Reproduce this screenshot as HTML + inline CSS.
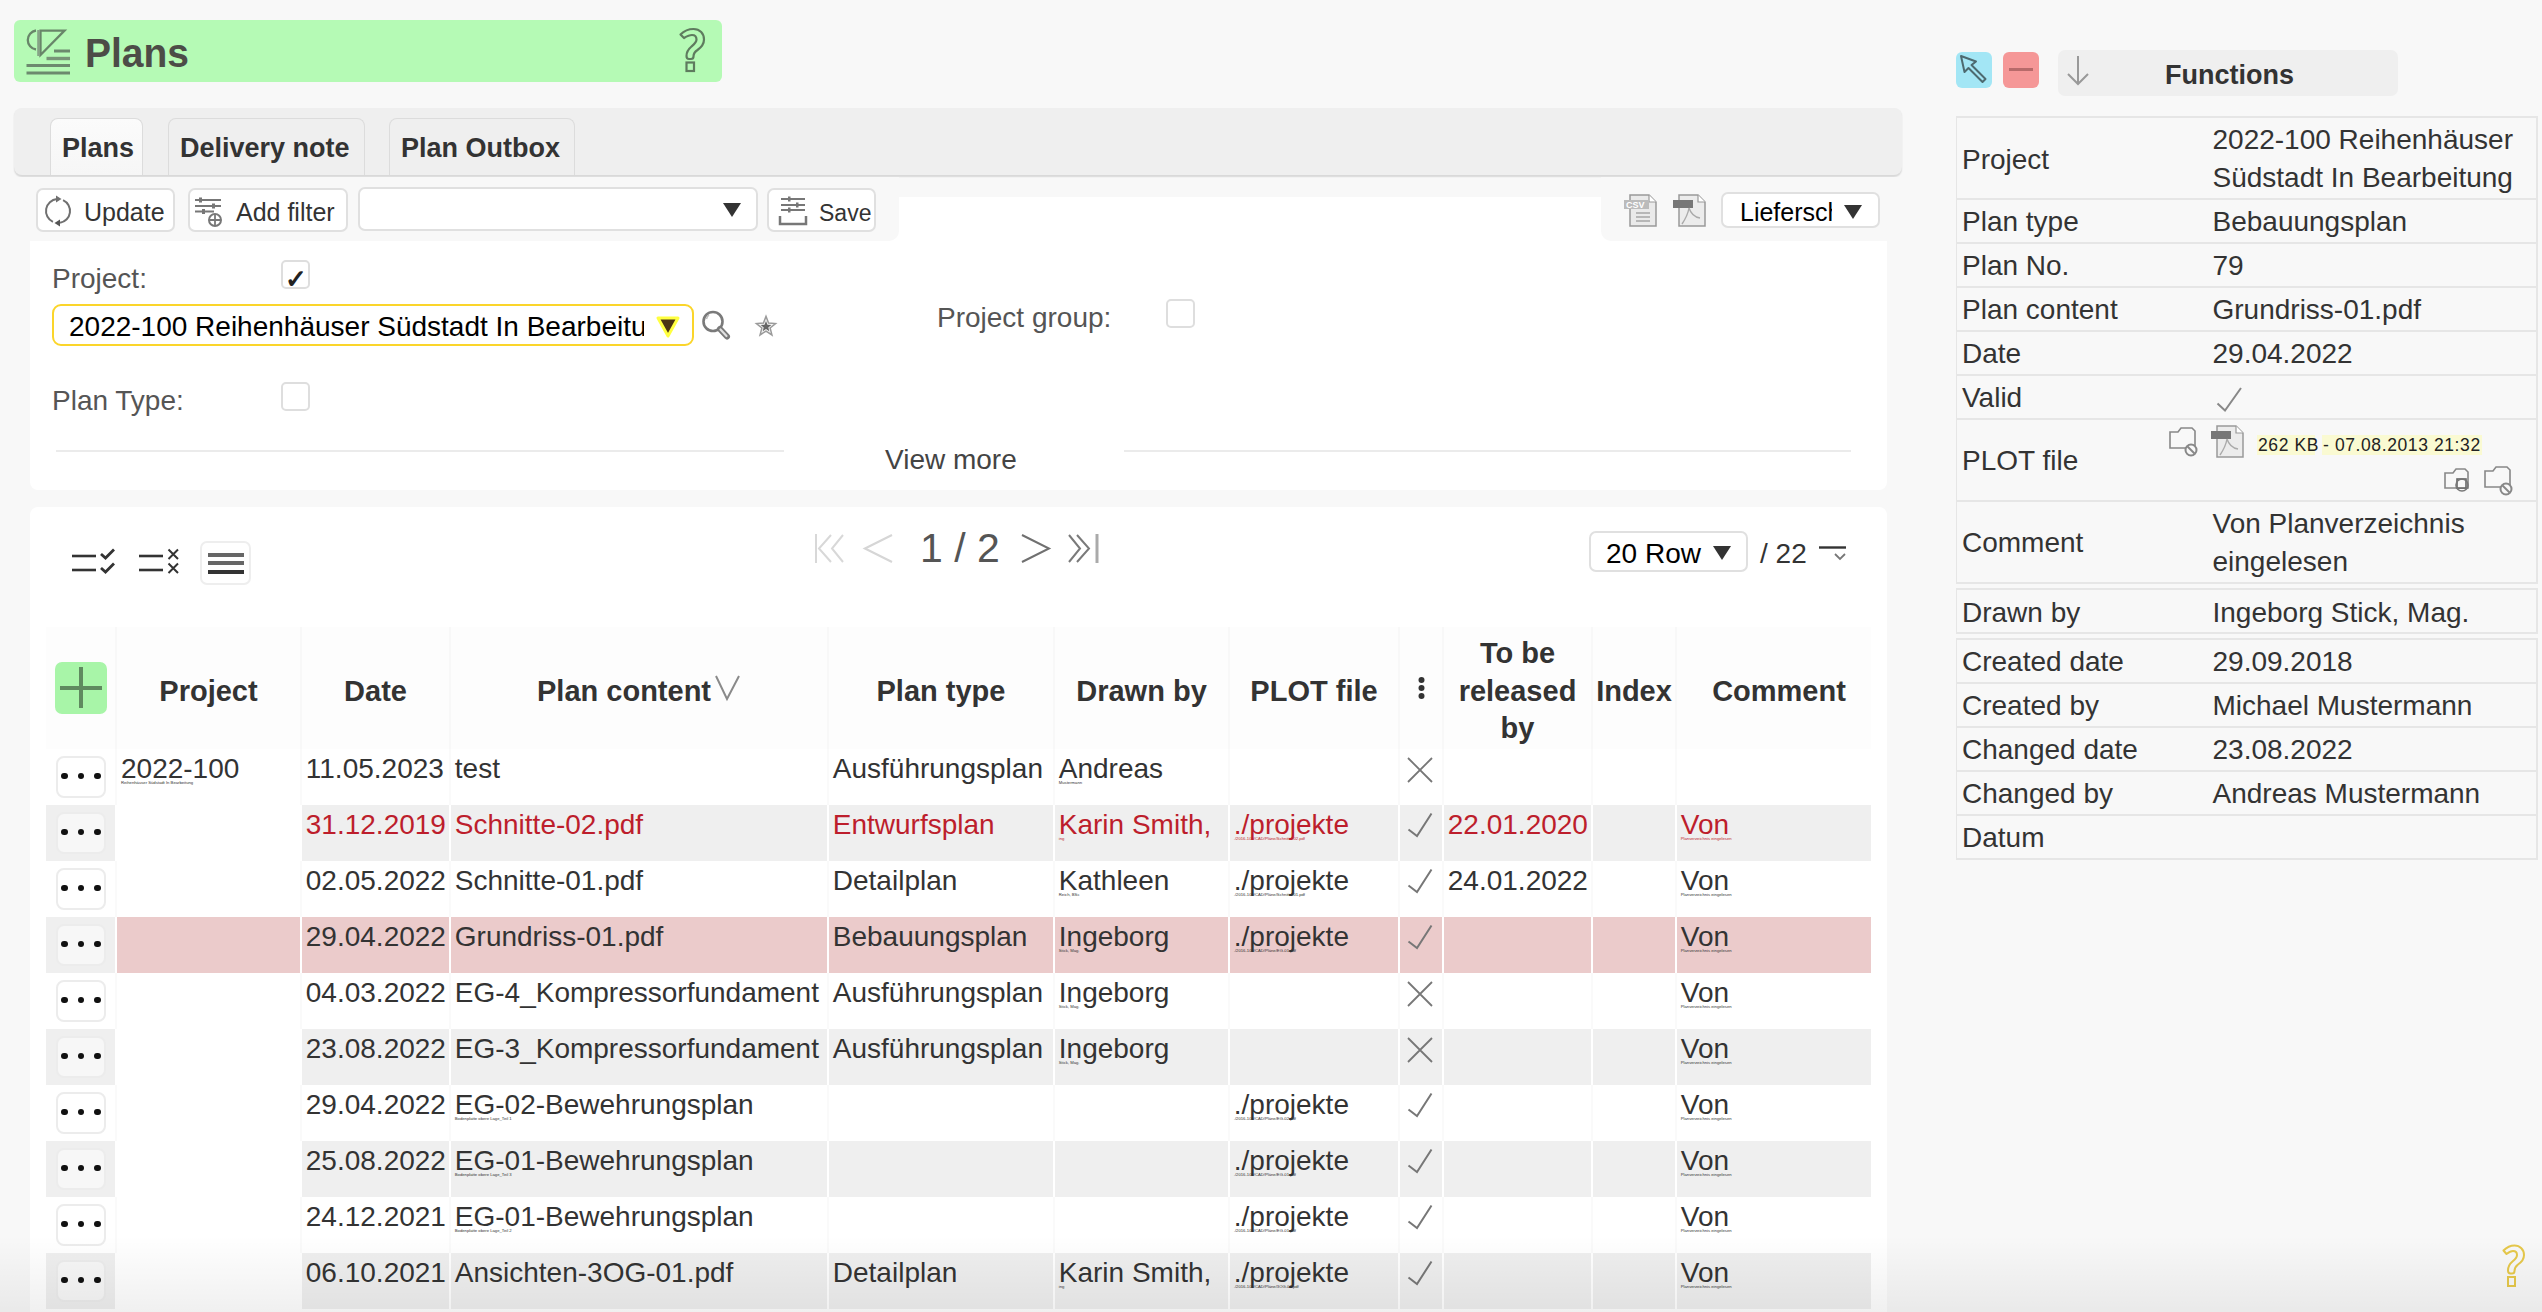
<!DOCTYPE html>
<html><head><meta charset="utf-8"><title>Plans</title>
<style>
html,body{margin:0;padding:0;}
body{width:2542px;height:1312px;overflow:hidden;background:#f8f8f8;position:relative;font-family:"Liberation Sans",sans-serif;}
.t,.b,.s{position:absolute;}
.t{margin:0;padding:0;}
.s{overflow:visible;}
</style></head><body>

<div class="b" style="left:14px;top:20px;width:708px;height:62px;background:#b5fab5;border-radius:6px;"></div>
<svg class="s" style="left:24px;top:28px;" width="50" height="50" viewBox="0 0 50 50">
<g fill="none" stroke="#688669" stroke-width="2.3">
<path d="M12 2.5 A9.6 9.6 0 0 0 12 21.5"/>
<path d="M16.5 2.6 L40.5 2.6 L16.5 27 Z"/>
</g>
<g stroke="#6c8a6e" stroke-width="3">
<path d="M30 23 L46 23"/>
<path d="M22.5 30.5 L46 30.5" stroke="#789578" stroke-width="3.4"/>
<path d="M2.5 37.5 L46 37.5"/>
<path d="M2.5 45 L46 45"/>
</g>
<path d="M14.5 2 L14.5 28" stroke="#86a386" stroke-width="2.6"/>
</svg>
<div class="t" style="left:85px;top:27.8px;font-size:39px;line-height:51px;color:#4c4c47;font-weight:700;white-space:nowrap;text-align:left;transform:scaleY(1.05);transform-origin:0 70%;">Plans</div>
<svg class="s" style="left:676px;top:26px;" width="32" height="48" viewBox="0 0 32 48">
<path d="M4.5 8.5 C9 4 14 3 17.5 3 C24 3 28 7.5 28 13.5 C28 19 25 21.5 21.5 24 C18.5 26 17.5 27.5 17.5 30.5 C17.5 32 16.5 33 15 33 L13 33 C11.5 33 10.5 32 10.5 30 C10.5 25.5 12.5 23 15.5 20.5 C18.5 18 20.5 16.5 20.5 13.5 C20.5 10.5 18.5 9 16 9 C13 9 10.5 10.5 8 12 Z" fill="none" stroke="#5e7b5e" stroke-width="2.2" stroke-linejoin="round"/>
<rect x="10.5" y="36.5" width="7.5" height="8.5" fill="none" stroke="#5e7b5e" stroke-width="2.2"/>
</svg>
<div class="b" style="left:14px;top:108px;width:1888px;height:67px;background:#efefef;border-radius:8px;box-shadow:0 1.5px 1.5px rgba(0,0,0,0.13);"></div>
<div class="b" style="left:50px;top:118px;width:93px;height:57px;background:linear-gradient(#fbfbfb,#f6f6f6);border:1px solid #dcdcdc;border-bottom:none;border-radius:8px 8px 0 0;box-sizing:border-box;"></div>
<div class="b" style="left:168px;top:118px;width:197px;height:57px;background:#efefef;border:1px solid #dcdcdc;border-bottom:none;border-radius:8px 8px 0 0;box-sizing:border-box;"></div>
<div class="b" style="left:389px;top:118px;width:186px;height:57px;background:#efefef;border:1px solid #dcdcdc;border-bottom:none;border-radius:8px 8px 0 0;box-sizing:border-box;"></div>
<div class="t" style="left:62px;top:130.7px;font-size:27px;line-height:35px;color:#333;font-weight:700;white-space:nowrap;text-align:left;">Plans</div>
<div class="t" style="left:180px;top:130.7px;font-size:27px;line-height:35px;color:#333;font-weight:700;white-space:nowrap;text-align:left;">Delivery note</div>
<div class="t" style="left:401px;top:130.7px;font-size:27px;line-height:35px;color:#333;font-weight:700;white-space:nowrap;text-align:left;">Plan Outbox</div>
<div class="b" style="left:30px;top:197px;width:1857px;height:293px;background:#fff;border-radius:8px;"></div>
<div class="b" style="left:14px;top:177px;width:885px;height:64px;background:#f8f8f8;border-radius:0 0 10px 0;"></div>
<div class="b" style="left:1601px;top:177px;width:301px;height:64px;background:#f8f8f8;border-radius:0 0 0 10px;"></div>
<div class="b" style="left:36px;top:188px;width:139px;height:44px;background:#fff;border:2px solid #e0e0e0;border-radius:7px;box-sizing:border-box;"></div>
<div class="b" style="left:188px;top:188px;width:160px;height:44px;background:#fff;border:2px solid #e0e0e0;border-radius:7px;box-sizing:border-box;"></div>
<div class="b" style="left:358px;top:187px;width:400px;height:44px;background:#fff;border:2px solid #e0e0e0;border-radius:7px;box-sizing:border-box;"></div>
<div class="b" style="left:767px;top:188px;width:109px;height:44px;background:#fff;border:2px solid #e0e0e0;border-radius:7px;box-sizing:border-box;"></div>
<div class="t" style="left:84px;top:195.9px;font-size:25px;line-height:32px;color:#333;font-weight:400;white-space:nowrap;text-align:left;">Update</div>
<div class="t" style="left:236px;top:195.9px;font-size:25px;line-height:32px;color:#333;font-weight:400;white-space:nowrap;text-align:left;">Add filter</div>
<div class="t" style="left:819px;top:197.5px;font-size:23px;line-height:30px;color:#333;font-weight:400;white-space:nowrap;text-align:left;">Save</div>
<svg class="s" style="left:44px;top:196px;" width="30" height="32" viewBox="0 0 30 32">
<g fill="none" stroke="#707070" stroke-width="2">
<path d="M19.07 4.12 A12 12 0 0 1 16.08 26.82"/>
<path d="M8.93 25.88 A12 12 0 0 1 12.95 3.05"/>
</g>
<path d="M12 -0.5 L12 6.5 L17.5 3 Z" fill="#707070"/>
<path d="M16 23.5 L16 30.5 L10.5 27 Z" fill="#555"/>
</svg>
<svg class="s" style="left:194px;top:196px;" width="32" height="32" viewBox="0 0 32 32">
<g stroke="#777" stroke-width="2">
<path d="M1 4 H27"/><path d="M1 10 H27"/><path d="M1 15.5 H20"/>
</g>
<g fill="#777"><rect x="5" y="1.5" width="3" height="5"/><rect x="18" y="7.5" width="3" height="5"/><rect x="8" y="13" width="3" height="5"/></g>
<circle cx="21" cy="24" r="6" fill="none" stroke="#777" stroke-width="2"/>
<path d="M21 18 V30 M15 24 H27" stroke="#777" stroke-width="1.8"/>
</svg>
<svg class="s" style="left:722px;top:202px;" width="20" height="16" viewBox="0 0 20 16"><path d="M1 1 H19 L10 15 Z" fill="#333"/></svg>
<svg class="s" style="left:778px;top:196px;" width="30" height="30" viewBox="0 0 30 30">
<g stroke="#777" stroke-width="2">
<path d="M3 3 H27"/><path d="M3 9 H27"/><path d="M3 14 H27"/>
</g>
<g fill="#777"><rect x="10" y="0.5" width="2.5" height="5"/><rect x="18" y="6.5" width="2.5" height="5"/><rect x="10" y="11.5" width="2.5" height="5"/></g>
<path d="M2 20 V28 H28 V20" fill="none" stroke="#777" stroke-width="2.5"/>
</svg>
<svg class="s" style="left:1624px;top:194px;" width="34" height="34" viewBox="0 0 34 34">
<path d="M6 1 H25 L32 8 V32 H6 Z" fill="#eaeaea" stroke="#999" stroke-width="1.5"/>
<path d="M25 1 V8 H32" fill="#fff" stroke="#999" stroke-width="1.2"/>
<rect x="0" y="6" width="25" height="9" fill="#bbb"/>
<text x="2" y="14" font-size="9" font-family="Liberation Sans" font-weight="700" fill="#fff">CSV</text>
<g stroke="#aaa" stroke-width="1.6"><path d="M12 19 H26"/><path d="M12 23 H26"/><path d="M12 27 H26"/></g>
</svg>
<svg class="s" style="left:1673px;top:194px;" width="34" height="34" viewBox="0 0 34 34">
<path d="M6 1 H25 L32 8 V32 H6 Z" fill="#ececec" stroke="#999" stroke-width="1.5"/>
<path d="M25 1 V8 H32" fill="#fff" stroke="#999" stroke-width="1.2"/>
<rect x="0" y="6" width="20" height="8" fill="#777"/>
<path d="M9 30 C13 24 15 20 16 14 C18 20 21 23 27 24" fill="none" stroke="#aaa" stroke-width="1.4"/>
</svg>
<div class="b" style="left:1721px;top:192px;width:159px;height:36px;background:#fff;border:2px solid #e0e0e0;border-radius:7px;box-sizing:border-box;"></div>
<div class="t" style="left:1740px;top:195px;width:92px;overflow:hidden;white-space:nowrap;font-size:25px;line-height:34px;color:#000;">Lieferschein</div>
<svg class="s" style="left:1843px;top:204px;" width="20" height="16" viewBox="0 0 20 16"><path d="M1 1 H19 L10 15 Z" fill="#333"/></svg>
<div class="t" style="left:52px;top:260.9px;font-size:28px;line-height:36px;color:#555;font-weight:400;white-space:nowrap;text-align:left;">Project:</div>
<div class="b" style="left:281px;top:260px;width:29px;height:29px;background:#fff;border:2px solid #dedede;border-radius:5px;box-sizing:border-box;"></div>
<div class="t" style="left:285px;top:261.5px;font-size:26px;line-height:34px;color:#222;font-weight:700;white-space:nowrap;text-align:left;">&#10003;</div>
<div class="b" style="left:52px;top:304px;width:642px;height:42px;background:#fff;border:2.5px solid #fbd52a;border-radius:9px;box-sizing:border-box;"></div>
<div class="t" style="left:69px;top:310px;width:575px;overflow:hidden;white-space:nowrap;font-size:28px;line-height:34px;color:#000;">2022-100 Reihenhäuser Südstadt In Bearbeitung</div>
<svg class="s" style="left:655px;top:315px;" width="26" height="24" viewBox="0 0 26 24"><path d="M3 3 H23 L13 21 Z" fill="#4b3414" stroke="#ffff40" stroke-width="3" stroke-linejoin="round"/></svg>
<svg class="s" style="left:700px;top:309px;" width="34" height="34" viewBox="0 0 34 34">
<circle cx="13" cy="12.5" r="9.5" fill="none" stroke="#7a7a7a" stroke-width="2.6"/>
<path d="M9 6 A7 7 0 0 0 6.5 10" fill="none" stroke="#bbb" stroke-width="1.5"/>
<path d="M20 20 L27 27.5" stroke="#7a7a7a" stroke-width="6" stroke-linecap="round"/>
<path d="M20.5 20.5 L26.5 27" stroke="#e0e0e0" stroke-width="2.2" stroke-linecap="round"/>
</svg>
<svg class="s" style="left:755px;top:315px;" width="22" height="22" viewBox="0 0 24 24"><path d="M12 1.5 L14.8 8.8 L22.5 9.3 L16.5 14.2 L18.5 21.8 L12 17.5 L5.5 21.8 L7.5 14.2 L1.5 9.3 L9.2 8.8 Z" fill="#f4f4f4" stroke="#9a9a9a" stroke-width="1.6"/><path d="M12 6.5 L13.6 10.7 L17.8 11 L14.5 13.6 L15.6 17.6 L12 15.3 L8.4 17.6 L9.5 13.6 L6.2 11 L10.4 10.7 Z" fill="#666"/></svg>
<div class="t" style="left:52px;top:383.4px;font-size:28px;line-height:36px;color:#555;font-weight:400;white-space:nowrap;text-align:left;">Plan Type:</div>
<div class="b" style="left:281px;top:382px;width:29px;height:29px;background:#fff;border:2px solid #dedede;border-radius:5px;box-sizing:border-box;"></div>
<div class="t" style="left:937px;top:299.9px;font-size:28px;line-height:36px;color:#555;font-weight:400;white-space:nowrap;text-align:left;">Project group:</div>
<div class="b" style="left:1166px;top:299px;width:29px;height:29px;background:#fff;border:2px solid #dedede;border-radius:5px;box-sizing:border-box;"></div>
<div class="b" style="left:56px;top:450px;width:728px;height:2px;background:#ebebeb;"></div>
<div class="b" style="left:1124px;top:450px;width:727px;height:2px;background:#ebebeb;"></div>
<div class="t" style="left:885px;top:442.4px;font-size:28px;line-height:36px;color:#444;font-weight:400;white-space:nowrap;text-align:left;">View more</div>
<div class="b" style="left:30px;top:507px;width:1857px;height:820px;background:#fff;border-radius:8px;"></div>
<svg class="s" style="left:70px;top:548px;" width="48" height="30" viewBox="0 0 48 30">
<g stroke="#333" stroke-width="2.6"><path d="M2 8 H26"/><path d="M2 22 H26"/></g>
<g fill="none" stroke="#333" stroke-width="2.8"><path d="M31 6 L35.5 10 L44 1.5"/><path d="M31 20 L35.5 24 L44 15.5"/></g>
</svg>
<svg class="s" style="left:137px;top:548px;" width="46" height="30" viewBox="0 0 46 30">
<g stroke="#333" stroke-width="2.6"><path d="M2 8 H26"/><path d="M2 22 H26"/></g>
<g fill="none" stroke="#333" stroke-width="2"><path d="M31.5 1.5 L41 11 M41 1.5 L31.5 11"/><path d="M31.5 15.5 L41 25 M41 15.5 L31.5 25"/></g>
</svg>
<div class="b" style="left:200px;top:541px;width:51px;height:44px;background:#fff;border:2px solid #eeeeee;border-radius:7px;box-sizing:border-box;"></div>
<div class="b" style="left:208px;top:553px;width:36px;height:4px;background:#666;"></div>
<div class="b" style="left:208px;top:561px;width:36px;height:4px;background:#666;"></div>
<div class="b" style="left:208px;top:570px;width:36px;height:4px;background:#333;"></div>
<svg class="s" style="left:813px;top:532px;" width="36" height="34" viewBox="0 0 36 34">
<g fill="none" stroke="#d8d8d8" stroke-width="2"><path d="M3 2 V31"/><path d="M18 3 L6 16.5 L18 30"/><path d="M30 3 L19 16.5 L30 30"/></g>
</svg>
<svg class="s" style="left:862px;top:532px;" width="34" height="34" viewBox="0 0 34 34"><path d="M30 3 L3 16.5 L30 30" fill="none" stroke="#d6d6d6" stroke-width="2.2"/></svg>
<div class="t" style="left:920px;top:522.2px;font-size:41px;line-height:53px;color:#555;font-weight:400;white-space:nowrap;text-align:left;">1 / 2</div>
<svg class="s" style="left:1019px;top:532px;" width="34" height="34" viewBox="0 0 34 34"><path d="M3 3 L30 16.5 L3 30" fill="none" stroke="#707070" stroke-width="2"/></svg>
<svg class="s" style="left:1066px;top:532px;" width="36" height="34" viewBox="0 0 36 34">
<g fill="none" stroke="#7a7a7a" stroke-width="2"><path d="M3 3 L14 16.5 L3 30"/><path d="M11 3 L23 16.5 L11 30"/></g>
<path d="M31 2 V31" stroke="#aaa" stroke-width="3"/>
</svg>
<div class="b" style="left:1589px;top:531px;width:159px;height:41px;background:#fff;border:2px solid #e0e0e0;border-radius:7px;box-sizing:border-box;"></div>
<div class="t" style="left:1606px;top:535.9px;font-size:28px;line-height:36px;color:#000;font-weight:400;white-space:nowrap;text-align:left;">20 Row</div>
<svg class="s" style="left:1712px;top:545px;" width="20" height="16" viewBox="0 0 20 16"><path d="M1 1 H19 L10 15 Z" fill="#333"/></svg>
<div class="t" style="left:1760px;top:535.9px;font-size:28px;line-height:36px;color:#333;font-weight:400;white-space:nowrap;text-align:left;">/ 22</div>
<svg class="s" style="left:1818px;top:544px;" width="30" height="18" viewBox="0 0 30 18"><path d="M1 3.5 H28" stroke="#333" stroke-width="2.4"/><path d="M17 10 L22 15 L27 10" fill="none" stroke="#777" stroke-width="1.8"/></svg>
<div class="b" style="left:46px;top:627px;width:1825px;height:122px;background:#f8f8f8;"></div>
<div class="b" style="left:46px;top:627px;width:69px;height:122px;background:#fdfdfd;"></div>
<div class="b" style="left:117px;top:627px;width:183px;height:122px;background:#fdfdfd;"></div>
<div class="b" style="left:302px;top:627px;width:147px;height:122px;background:#fdfdfd;"></div>
<div class="b" style="left:451px;top:627px;width:376px;height:122px;background:#fdfdfd;"></div>
<div class="b" style="left:829px;top:627px;width:224px;height:122px;background:#fdfdfd;"></div>
<div class="b" style="left:1055px;top:627px;width:173px;height:122px;background:#fdfdfd;"></div>
<div class="b" style="left:1230px;top:627px;width:168px;height:122px;background:#fdfdfd;"></div>
<div class="b" style="left:1400px;top:627px;width:42px;height:122px;background:#fdfdfd;"></div>
<div class="b" style="left:1444px;top:627px;width:147px;height:122px;background:#fdfdfd;"></div>
<div class="b" style="left:1593px;top:627px;width:82px;height:122px;background:#fdfdfd;"></div>
<div class="b" style="left:1677px;top:627px;width:194px;height:122px;background:#fdfdfd;"></div>
<div class="b" style="left:55px;top:662px;width:52px;height:52px;background:#a8f5a8;border-radius:7px;"></div>
<div class="b" style="left:79px;top:667px;width:4px;height:41px;background:#5f8a5f;"></div>
<div class="b" style="left:60px;top:686px;width:42px;height:4px;background:#5f8a5f;"></div>
<div class="t" style="left:117px;top:671.6px;font-size:29px;line-height:38px;color:#333;font-weight:700;width:183px;text-align:center;">Project</div>
<div class="t" style="left:302px;top:671.6px;font-size:29px;line-height:38px;color:#333;font-weight:700;width:147px;text-align:center;">Date</div>
<div class="t" style="left:436px;top:671.6px;font-size:29px;line-height:38px;color:#333;font-weight:700;width:376px;text-align:center;">Plan content</div>
<svg class="s" style="left:714px;top:674px;" width="28" height="27" viewBox="0 0 28 27"><path d="M2 2 L13 25 L25 2" fill="none" stroke="#8a8a8a" stroke-width="2"/></svg>
<div class="t" style="left:829px;top:671.6px;font-size:29px;line-height:38px;color:#333;font-weight:700;width:224px;text-align:center;">Plan type</div>
<div class="t" style="left:1055px;top:671.6px;font-size:29px;line-height:38px;color:#333;font-weight:700;width:173px;text-align:center;">Drawn by</div>
<div class="t" style="left:1230px;top:671.6px;font-size:29px;line-height:38px;color:#333;font-weight:700;width:168px;text-align:center;">PLOT file</div>
<svg class="s" style="left:1417px;top:676px;" width="9" height="24" viewBox="0 0 9 24"><circle cx="4.5" cy="4" r="3" fill="#333"/><circle cx="4.5" cy="12" r="3" fill="#333"/><circle cx="4.5" cy="20" r="3" fill="#333"/></svg>
<div class="t" style="left:1444px;top:633.6px;font-size:29px;line-height:38px;color:#333;font-weight:700;width:147px;text-align:center;">To be</div>
<div class="t" style="left:1444px;top:671.6px;font-size:29px;line-height:38px;color:#333;font-weight:700;width:147px;text-align:center;">released</div>
<div class="t" style="left:1444px;top:709.1px;font-size:29px;line-height:38px;color:#333;font-weight:700;width:147px;text-align:center;">by</div>
<div class="t" style="left:1593px;top:671.6px;font-size:29px;line-height:38px;color:#333;font-weight:700;width:82px;text-align:center;">Index</div>
<div class="t" style="left:1682px;top:671.6px;font-size:29px;line-height:38px;color:#333;font-weight:700;width:194px;text-align:center;">Comment</div>
<div class="b" style="left:46px;top:749px;width:1825px;height:56px;background:#fafafa;"></div>
<div class="b" style="left:46px;top:749px;width:69px;height:56px;background:#ffffff;"></div>
<div class="b" style="left:117px;top:749px;width:183px;height:56px;background:#ffffff;"></div>
<div class="b" style="left:302px;top:749px;width:147px;height:56px;background:#ffffff;"></div>
<div class="b" style="left:451px;top:749px;width:376px;height:56px;background:#ffffff;"></div>
<div class="b" style="left:829px;top:749px;width:224px;height:56px;background:#ffffff;"></div>
<div class="b" style="left:1055px;top:749px;width:173px;height:56px;background:#ffffff;"></div>
<div class="b" style="left:1230px;top:749px;width:168px;height:56px;background:#ffffff;"></div>
<div class="b" style="left:1400px;top:749px;width:42px;height:56px;background:#ffffff;"></div>
<div class="b" style="left:1444px;top:749px;width:147px;height:56px;background:#ffffff;"></div>
<div class="b" style="left:1593px;top:749px;width:82px;height:56px;background:#ffffff;"></div>
<div class="b" style="left:1677px;top:749px;width:194px;height:56px;background:#ffffff;"></div>
<div class="b" style="left:56px;top:756px;width:50px;height:42px;background:#ffffff;border:2px solid #ececec;border-radius:8px;box-sizing:border-box;"></div>
<div class="b" style="left:61.2px;top:772.7px;width:6.6px;height:6.6px;border-radius:50%;background:#111;"></div>
<div class="b" style="left:77.7px;top:772.7px;width:6.6px;height:6.6px;border-radius:50%;background:#111;"></div>
<div class="b" style="left:94.2px;top:772.7px;width:6.6px;height:6.6px;border-radius:50%;background:#111;"></div>
<div class="t" style="left:305.8px;top:750.9px;font-size:28px;line-height:36px;color:#333;font-weight:400;white-space:nowrap;text-align:left;">11.05.2023</div>
<div class="t" style="left:454.8px;top:750.9px;font-size:28px;line-height:36px;color:#333;font-weight:400;white-space:nowrap;text-align:left;">test</div>
<div class="t" style="left:832.8px;top:750.9px;font-size:28px;line-height:36px;color:#333;font-weight:400;white-space:nowrap;text-align:left;">Ausführungsplan</div>
<div class="t" style="left:1058.8px;top:750.9px;font-size:28px;line-height:36px;color:#333;font-weight:400;white-space:nowrap;text-align:left;">Andreas</div>
<svg class="s" style="left:1406px;top:756px;" width="28" height="28" viewBox="0 0 28 28"><path d="M2 2 L26 26 M26 2 L2 26" stroke="#777" stroke-width="1.8"/></svg>
<div class="t" style="left:1058.8px;top:780.1px;font-size:4.2px;line-height:5px;color:#333;font-weight:400;white-space:nowrap;text-align:left;">Mustermann</div>
<div class="t" style="left:121px;top:750.9px;font-size:28px;line-height:36px;color:#333;font-weight:400;white-space:nowrap;text-align:left;">2022-100</div>
<div class="t" style="left:121px;top:780.1px;font-size:4.2px;line-height:5px;color:#333;font-weight:400;white-space:nowrap;text-align:left;">Reihenhäuser Südstadt In Bearbeitung</div>
<div class="b" style="left:46px;top:805px;width:69px;height:56px;background:#efefef;"></div>
<div class="b" style="left:117px;top:805px;width:183px;height:56px;background:#ffffff;"></div>
<div class="b" style="left:302px;top:805px;width:147px;height:56px;background:#efefef;"></div>
<div class="b" style="left:451px;top:805px;width:376px;height:56px;background:#efefef;"></div>
<div class="b" style="left:829px;top:805px;width:224px;height:56px;background:#efefef;"></div>
<div class="b" style="left:1055px;top:805px;width:173px;height:56px;background:#efefef;"></div>
<div class="b" style="left:1230px;top:805px;width:168px;height:56px;background:#efefef;"></div>
<div class="b" style="left:1400px;top:805px;width:42px;height:56px;background:#efefef;"></div>
<div class="b" style="left:1444px;top:805px;width:147px;height:56px;background:#efefef;"></div>
<div class="b" style="left:1593px;top:805px;width:82px;height:56px;background:#efefef;"></div>
<div class="b" style="left:1677px;top:805px;width:194px;height:56px;background:#efefef;"></div>
<div class="b" style="left:56px;top:812px;width:50px;height:42px;background:#f7f7f7;border:2px solid #ececec;border-radius:8px;box-sizing:border-box;"></div>
<div class="b" style="left:61.2px;top:828.7px;width:6.6px;height:6.6px;border-radius:50%;background:#111;"></div>
<div class="b" style="left:77.7px;top:828.7px;width:6.6px;height:6.6px;border-radius:50%;background:#111;"></div>
<div class="b" style="left:94.2px;top:828.7px;width:6.6px;height:6.6px;border-radius:50%;background:#111;"></div>
<div class="t" style="left:305.8px;top:806.9px;font-size:28px;line-height:36px;color:#bd1e2c;font-weight:400;white-space:nowrap;text-align:left;">31.12.2019</div>
<div class="t" style="left:454.8px;top:806.9px;font-size:28px;line-height:36px;color:#bd1e2c;font-weight:400;white-space:nowrap;text-align:left;">Schnitte-02.pdf</div>
<div class="t" style="left:832.8px;top:806.9px;font-size:28px;line-height:36px;color:#bd1e2c;font-weight:400;white-space:nowrap;text-align:left;">Entwurfsplan</div>
<div class="t" style="left:1058.8px;top:806.9px;font-size:28px;line-height:36px;color:#bd1e2c;font-weight:400;white-space:nowrap;text-align:left;">Karin Smith,</div>
<div class="t" style="left:1233.8px;top:806.9px;font-size:28px;line-height:36px;color:#bd1e2c;font-weight:400;white-space:nowrap;text-align:left;">./projekte</div>
<svg class="s" style="left:1406px;top:812px;" width="28" height="26" viewBox="0 0 28 26"><path d="M2.5 17.5 L11 24 L25.5 1.5" fill="none" stroke="#777" stroke-width="2"/></svg>
<div class="t" style="left:1447.8px;top:806.9px;font-size:28px;line-height:36px;color:#bd1e2c;font-weight:400;white-space:nowrap;text-align:left;">22.01.2020</div>
<div class="t" style="left:1680.8px;top:806.9px;font-size:28px;line-height:36px;color:#bd1e2c;font-weight:400;white-space:nowrap;text-align:left;">Von</div>
<div class="t" style="left:1058.8px;top:836.1px;font-size:4.2px;line-height:5px;color:#bd1e2c;font-weight:400;white-space:nowrap;text-align:left;">ing</div>
<div class="t" style="left:1233.8px;top:836.1px;font-size:4.2px;line-height:5px;color:#bd1e2c;font-weight:400;white-space:nowrap;text-align:left;">./2016-100/CAD/Pläne/Schnitte-02.pdf</div>
<div class="t" style="left:1680.8px;top:836.1px;font-size:4.2px;line-height:5px;color:#bd1e2c;font-weight:400;white-space:nowrap;text-align:left;">Planverzeichnis eingelesen</div>
<div class="b" style="left:46px;top:861px;width:1825px;height:56px;background:#fafafa;"></div>
<div class="b" style="left:46px;top:861px;width:69px;height:56px;background:#ffffff;"></div>
<div class="b" style="left:117px;top:861px;width:183px;height:56px;background:#ffffff;"></div>
<div class="b" style="left:302px;top:861px;width:147px;height:56px;background:#ffffff;"></div>
<div class="b" style="left:451px;top:861px;width:376px;height:56px;background:#ffffff;"></div>
<div class="b" style="left:829px;top:861px;width:224px;height:56px;background:#ffffff;"></div>
<div class="b" style="left:1055px;top:861px;width:173px;height:56px;background:#ffffff;"></div>
<div class="b" style="left:1230px;top:861px;width:168px;height:56px;background:#ffffff;"></div>
<div class="b" style="left:1400px;top:861px;width:42px;height:56px;background:#ffffff;"></div>
<div class="b" style="left:1444px;top:861px;width:147px;height:56px;background:#ffffff;"></div>
<div class="b" style="left:1593px;top:861px;width:82px;height:56px;background:#ffffff;"></div>
<div class="b" style="left:1677px;top:861px;width:194px;height:56px;background:#ffffff;"></div>
<div class="b" style="left:56px;top:868px;width:50px;height:42px;background:#ffffff;border:2px solid #ececec;border-radius:8px;box-sizing:border-box;"></div>
<div class="b" style="left:61.2px;top:884.7px;width:6.6px;height:6.6px;border-radius:50%;background:#111;"></div>
<div class="b" style="left:77.7px;top:884.7px;width:6.6px;height:6.6px;border-radius:50%;background:#111;"></div>
<div class="b" style="left:94.2px;top:884.7px;width:6.6px;height:6.6px;border-radius:50%;background:#111;"></div>
<div class="t" style="left:305.8px;top:862.9px;font-size:28px;line-height:36px;color:#333;font-weight:400;white-space:nowrap;text-align:left;">02.05.2022</div>
<div class="t" style="left:454.8px;top:862.9px;font-size:28px;line-height:36px;color:#333;font-weight:400;white-space:nowrap;text-align:left;">Schnitte-01.pdf</div>
<div class="t" style="left:832.8px;top:862.9px;font-size:28px;line-height:36px;color:#333;font-weight:400;white-space:nowrap;text-align:left;">Detailplan</div>
<div class="t" style="left:1058.8px;top:862.9px;font-size:28px;line-height:36px;color:#333;font-weight:400;white-space:nowrap;text-align:left;">Kathleen</div>
<div class="t" style="left:1233.8px;top:862.9px;font-size:28px;line-height:36px;color:#333;font-weight:400;white-space:nowrap;text-align:left;">./projekte</div>
<svg class="s" style="left:1406px;top:868px;" width="28" height="26" viewBox="0 0 28 26"><path d="M2.5 17.5 L11 24 L25.5 1.5" fill="none" stroke="#777" stroke-width="2"/></svg>
<div class="t" style="left:1447.8px;top:862.9px;font-size:28px;line-height:36px;color:#333;font-weight:400;white-space:nowrap;text-align:left;">24.01.2022</div>
<div class="t" style="left:1680.8px;top:862.9px;font-size:28px;line-height:36px;color:#333;font-weight:400;white-space:nowrap;text-align:left;">Von</div>
<div class="t" style="left:1058.8px;top:892.1px;font-size:4.2px;line-height:5px;color:#333;font-weight:400;white-space:nowrap;text-align:left;">Reich, BSc</div>
<div class="t" style="left:1233.8px;top:892.1px;font-size:4.2px;line-height:5px;color:#333;font-weight:400;white-space:nowrap;text-align:left;">./2016-100/CAD/Pläne/Schnitte-01.pdf</div>
<div class="t" style="left:1680.8px;top:892.1px;font-size:4.2px;line-height:5px;color:#333;font-weight:400;white-space:nowrap;text-align:left;">Planverzeichnis eingelesen</div>
<div class="b" style="left:46px;top:917px;width:69px;height:56px;background:#efefef;"></div>
<div class="b" style="left:117px;top:917px;width:183px;height:56px;background:#ebcbcb;"></div>
<div class="b" style="left:302px;top:917px;width:147px;height:56px;background:#ebcbcb;"></div>
<div class="b" style="left:451px;top:917px;width:376px;height:56px;background:#ebcbcb;"></div>
<div class="b" style="left:829px;top:917px;width:224px;height:56px;background:#ebcbcb;"></div>
<div class="b" style="left:1055px;top:917px;width:173px;height:56px;background:#ebcbcb;"></div>
<div class="b" style="left:1230px;top:917px;width:168px;height:56px;background:#ebcbcb;"></div>
<div class="b" style="left:1400px;top:917px;width:42px;height:56px;background:#ebcbcb;"></div>
<div class="b" style="left:1444px;top:917px;width:147px;height:56px;background:#ebcbcb;"></div>
<div class="b" style="left:1593px;top:917px;width:82px;height:56px;background:#ebcbcb;"></div>
<div class="b" style="left:1677px;top:917px;width:194px;height:56px;background:#ebcbcb;"></div>
<div class="b" style="left:56px;top:924px;width:50px;height:42px;background:#f7f7f7;border:2px solid #ececec;border-radius:8px;box-sizing:border-box;"></div>
<div class="b" style="left:61.2px;top:940.7px;width:6.6px;height:6.6px;border-radius:50%;background:#111;"></div>
<div class="b" style="left:77.7px;top:940.7px;width:6.6px;height:6.6px;border-radius:50%;background:#111;"></div>
<div class="b" style="left:94.2px;top:940.7px;width:6.6px;height:6.6px;border-radius:50%;background:#111;"></div>
<div class="t" style="left:305.8px;top:918.9px;font-size:28px;line-height:36px;color:#333;font-weight:400;white-space:nowrap;text-align:left;">29.04.2022</div>
<div class="t" style="left:454.8px;top:918.9px;font-size:28px;line-height:36px;color:#333;font-weight:400;white-space:nowrap;text-align:left;">Grundriss-01.pdf</div>
<div class="t" style="left:832.8px;top:918.9px;font-size:28px;line-height:36px;color:#333;font-weight:400;white-space:nowrap;text-align:left;">Bebauungsplan</div>
<div class="t" style="left:1058.8px;top:918.9px;font-size:28px;line-height:36px;color:#333;font-weight:400;white-space:nowrap;text-align:left;">Ingeborg</div>
<div class="t" style="left:1233.8px;top:918.9px;font-size:28px;line-height:36px;color:#333;font-weight:400;white-space:nowrap;text-align:left;">./projekte</div>
<svg class="s" style="left:1406px;top:924px;" width="28" height="26" viewBox="0 0 28 26"><path d="M2.5 17.5 L11 24 L25.5 1.5" fill="none" stroke="#777" stroke-width="2"/></svg>
<div class="t" style="left:1680.8px;top:918.9px;font-size:28px;line-height:36px;color:#333;font-weight:400;white-space:nowrap;text-align:left;">Von</div>
<div class="t" style="left:1058.8px;top:948.1px;font-size:4.2px;line-height:5px;color:#333;font-weight:400;white-space:nowrap;text-align:left;">Stick, Mag.</div>
<div class="t" style="left:1233.8px;top:948.1px;font-size:4.2px;line-height:5px;color:#333;font-weight:400;white-space:nowrap;text-align:left;">./2016-100/CAD/Pläne/EG-01.pdf</div>
<div class="t" style="left:1680.8px;top:948.1px;font-size:4.2px;line-height:5px;color:#333;font-weight:400;white-space:nowrap;text-align:left;">Planverzeichnis eingelesen</div>
<div class="b" style="left:46px;top:973px;width:1825px;height:56px;background:#fafafa;"></div>
<div class="b" style="left:46px;top:973px;width:69px;height:56px;background:#ffffff;"></div>
<div class="b" style="left:117px;top:973px;width:183px;height:56px;background:#ffffff;"></div>
<div class="b" style="left:302px;top:973px;width:147px;height:56px;background:#ffffff;"></div>
<div class="b" style="left:451px;top:973px;width:376px;height:56px;background:#ffffff;"></div>
<div class="b" style="left:829px;top:973px;width:224px;height:56px;background:#ffffff;"></div>
<div class="b" style="left:1055px;top:973px;width:173px;height:56px;background:#ffffff;"></div>
<div class="b" style="left:1230px;top:973px;width:168px;height:56px;background:#ffffff;"></div>
<div class="b" style="left:1400px;top:973px;width:42px;height:56px;background:#ffffff;"></div>
<div class="b" style="left:1444px;top:973px;width:147px;height:56px;background:#ffffff;"></div>
<div class="b" style="left:1593px;top:973px;width:82px;height:56px;background:#ffffff;"></div>
<div class="b" style="left:1677px;top:973px;width:194px;height:56px;background:#ffffff;"></div>
<div class="b" style="left:56px;top:980px;width:50px;height:42px;background:#ffffff;border:2px solid #ececec;border-radius:8px;box-sizing:border-box;"></div>
<div class="b" style="left:61.2px;top:996.7px;width:6.6px;height:6.6px;border-radius:50%;background:#111;"></div>
<div class="b" style="left:77.7px;top:996.7px;width:6.6px;height:6.6px;border-radius:50%;background:#111;"></div>
<div class="b" style="left:94.2px;top:996.7px;width:6.6px;height:6.6px;border-radius:50%;background:#111;"></div>
<div class="t" style="left:305.8px;top:974.9px;font-size:28px;line-height:36px;color:#333;font-weight:400;white-space:nowrap;text-align:left;">04.03.2022</div>
<div class="t" style="left:454.8px;top:974.9px;font-size:28px;line-height:36px;color:#333;font-weight:400;white-space:nowrap;text-align:left;">EG-4_Kompressorfundament</div>
<div class="t" style="left:832.8px;top:974.9px;font-size:28px;line-height:36px;color:#333;font-weight:400;white-space:nowrap;text-align:left;">Ausführungsplan</div>
<div class="t" style="left:1058.8px;top:974.9px;font-size:28px;line-height:36px;color:#333;font-weight:400;white-space:nowrap;text-align:left;">Ingeborg</div>
<svg class="s" style="left:1406px;top:980px;" width="28" height="28" viewBox="0 0 28 28"><path d="M2 2 L26 26 M26 2 L2 26" stroke="#777" stroke-width="1.8"/></svg>
<div class="t" style="left:1680.8px;top:974.9px;font-size:28px;line-height:36px;color:#333;font-weight:400;white-space:nowrap;text-align:left;">Von</div>
<div class="t" style="left:1058.8px;top:1004.1px;font-size:4.2px;line-height:5px;color:#333;font-weight:400;white-space:nowrap;text-align:left;">Stick, Mag.</div>
<div class="t" style="left:1680.8px;top:1004.1px;font-size:4.2px;line-height:5px;color:#333;font-weight:400;white-space:nowrap;text-align:left;">Planverzeichnis eingelesen</div>
<div class="b" style="left:46px;top:1029px;width:69px;height:56px;background:#efefef;"></div>
<div class="b" style="left:117px;top:1029px;width:183px;height:56px;background:#ffffff;"></div>
<div class="b" style="left:302px;top:1029px;width:147px;height:56px;background:#efefef;"></div>
<div class="b" style="left:451px;top:1029px;width:376px;height:56px;background:#efefef;"></div>
<div class="b" style="left:829px;top:1029px;width:224px;height:56px;background:#efefef;"></div>
<div class="b" style="left:1055px;top:1029px;width:173px;height:56px;background:#efefef;"></div>
<div class="b" style="left:1230px;top:1029px;width:168px;height:56px;background:#efefef;"></div>
<div class="b" style="left:1400px;top:1029px;width:42px;height:56px;background:#efefef;"></div>
<div class="b" style="left:1444px;top:1029px;width:147px;height:56px;background:#efefef;"></div>
<div class="b" style="left:1593px;top:1029px;width:82px;height:56px;background:#efefef;"></div>
<div class="b" style="left:1677px;top:1029px;width:194px;height:56px;background:#efefef;"></div>
<div class="b" style="left:56px;top:1036px;width:50px;height:42px;background:#f7f7f7;border:2px solid #ececec;border-radius:8px;box-sizing:border-box;"></div>
<div class="b" style="left:61.2px;top:1052.7px;width:6.6px;height:6.6px;border-radius:50%;background:#111;"></div>
<div class="b" style="left:77.7px;top:1052.7px;width:6.6px;height:6.6px;border-radius:50%;background:#111;"></div>
<div class="b" style="left:94.2px;top:1052.7px;width:6.6px;height:6.6px;border-radius:50%;background:#111;"></div>
<div class="t" style="left:305.8px;top:1030.9px;font-size:28px;line-height:36px;color:#333;font-weight:400;white-space:nowrap;text-align:left;">23.08.2022</div>
<div class="t" style="left:454.8px;top:1030.9px;font-size:28px;line-height:36px;color:#333;font-weight:400;white-space:nowrap;text-align:left;">EG-3_Kompressorfundament</div>
<div class="t" style="left:832.8px;top:1030.9px;font-size:28px;line-height:36px;color:#333;font-weight:400;white-space:nowrap;text-align:left;">Ausführungsplan</div>
<div class="t" style="left:1058.8px;top:1030.9px;font-size:28px;line-height:36px;color:#333;font-weight:400;white-space:nowrap;text-align:left;">Ingeborg</div>
<svg class="s" style="left:1406px;top:1036px;" width="28" height="28" viewBox="0 0 28 28"><path d="M2 2 L26 26 M26 2 L2 26" stroke="#777" stroke-width="1.8"/></svg>
<div class="t" style="left:1680.8px;top:1030.9px;font-size:28px;line-height:36px;color:#333;font-weight:400;white-space:nowrap;text-align:left;">Von</div>
<div class="t" style="left:1058.8px;top:1060.1px;font-size:4.2px;line-height:5px;color:#333;font-weight:400;white-space:nowrap;text-align:left;">Stick, Mag.</div>
<div class="t" style="left:1680.8px;top:1060.1px;font-size:4.2px;line-height:5px;color:#333;font-weight:400;white-space:nowrap;text-align:left;">Planverzeichnis eingelesen</div>
<div class="b" style="left:46px;top:1085px;width:1825px;height:56px;background:#fafafa;"></div>
<div class="b" style="left:46px;top:1085px;width:69px;height:56px;background:#ffffff;"></div>
<div class="b" style="left:117px;top:1085px;width:183px;height:56px;background:#ffffff;"></div>
<div class="b" style="left:302px;top:1085px;width:147px;height:56px;background:#ffffff;"></div>
<div class="b" style="left:451px;top:1085px;width:376px;height:56px;background:#ffffff;"></div>
<div class="b" style="left:829px;top:1085px;width:224px;height:56px;background:#ffffff;"></div>
<div class="b" style="left:1055px;top:1085px;width:173px;height:56px;background:#ffffff;"></div>
<div class="b" style="left:1230px;top:1085px;width:168px;height:56px;background:#ffffff;"></div>
<div class="b" style="left:1400px;top:1085px;width:42px;height:56px;background:#ffffff;"></div>
<div class="b" style="left:1444px;top:1085px;width:147px;height:56px;background:#ffffff;"></div>
<div class="b" style="left:1593px;top:1085px;width:82px;height:56px;background:#ffffff;"></div>
<div class="b" style="left:1677px;top:1085px;width:194px;height:56px;background:#ffffff;"></div>
<div class="b" style="left:56px;top:1092px;width:50px;height:42px;background:#ffffff;border:2px solid #ececec;border-radius:8px;box-sizing:border-box;"></div>
<div class="b" style="left:61.2px;top:1108.7px;width:6.6px;height:6.6px;border-radius:50%;background:#111;"></div>
<div class="b" style="left:77.7px;top:1108.7px;width:6.6px;height:6.6px;border-radius:50%;background:#111;"></div>
<div class="b" style="left:94.2px;top:1108.7px;width:6.6px;height:6.6px;border-radius:50%;background:#111;"></div>
<div class="t" style="left:305.8px;top:1086.9px;font-size:28px;line-height:36px;color:#333;font-weight:400;white-space:nowrap;text-align:left;">29.04.2022</div>
<div class="t" style="left:454.8px;top:1086.9px;font-size:28px;line-height:36px;color:#333;font-weight:400;white-space:nowrap;text-align:left;">EG-02-Bewehrungsplan</div>
<div class="t" style="left:1233.8px;top:1086.9px;font-size:28px;line-height:36px;color:#333;font-weight:400;white-space:nowrap;text-align:left;">./projekte</div>
<svg class="s" style="left:1406px;top:1092px;" width="28" height="26" viewBox="0 0 28 26"><path d="M2.5 17.5 L11 24 L25.5 1.5" fill="none" stroke="#777" stroke-width="2"/></svg>
<div class="t" style="left:1680.8px;top:1086.9px;font-size:28px;line-height:36px;color:#333;font-weight:400;white-space:nowrap;text-align:left;">Von</div>
<div class="t" style="left:454.8px;top:1116.1px;font-size:4.2px;line-height:5px;color:#333;font-weight:400;white-space:nowrap;text-align:left;">Bodenplatte obere Lage_Teil 1</div>
<div class="t" style="left:1233.8px;top:1116.1px;font-size:4.2px;line-height:5px;color:#333;font-weight:400;white-space:nowrap;text-align:left;">./2016-100/CAD/Pläne/EG-02.pdf</div>
<div class="t" style="left:1680.8px;top:1116.1px;font-size:4.2px;line-height:5px;color:#333;font-weight:400;white-space:nowrap;text-align:left;">Planverzeichnis eingelesen</div>
<div class="b" style="left:46px;top:1141px;width:69px;height:56px;background:#efefef;"></div>
<div class="b" style="left:117px;top:1141px;width:183px;height:56px;background:#ffffff;"></div>
<div class="b" style="left:302px;top:1141px;width:147px;height:56px;background:#efefef;"></div>
<div class="b" style="left:451px;top:1141px;width:376px;height:56px;background:#efefef;"></div>
<div class="b" style="left:829px;top:1141px;width:224px;height:56px;background:#efefef;"></div>
<div class="b" style="left:1055px;top:1141px;width:173px;height:56px;background:#efefef;"></div>
<div class="b" style="left:1230px;top:1141px;width:168px;height:56px;background:#efefef;"></div>
<div class="b" style="left:1400px;top:1141px;width:42px;height:56px;background:#efefef;"></div>
<div class="b" style="left:1444px;top:1141px;width:147px;height:56px;background:#efefef;"></div>
<div class="b" style="left:1593px;top:1141px;width:82px;height:56px;background:#efefef;"></div>
<div class="b" style="left:1677px;top:1141px;width:194px;height:56px;background:#efefef;"></div>
<div class="b" style="left:56px;top:1148px;width:50px;height:42px;background:#f7f7f7;border:2px solid #ececec;border-radius:8px;box-sizing:border-box;"></div>
<div class="b" style="left:61.2px;top:1164.7px;width:6.6px;height:6.6px;border-radius:50%;background:#111;"></div>
<div class="b" style="left:77.7px;top:1164.7px;width:6.6px;height:6.6px;border-radius:50%;background:#111;"></div>
<div class="b" style="left:94.2px;top:1164.7px;width:6.6px;height:6.6px;border-radius:50%;background:#111;"></div>
<div class="t" style="left:305.8px;top:1142.9px;font-size:28px;line-height:36px;color:#333;font-weight:400;white-space:nowrap;text-align:left;">25.08.2022</div>
<div class="t" style="left:454.8px;top:1142.9px;font-size:28px;line-height:36px;color:#333;font-weight:400;white-space:nowrap;text-align:left;">EG-01-Bewehrungsplan</div>
<div class="t" style="left:1233.8px;top:1142.9px;font-size:28px;line-height:36px;color:#333;font-weight:400;white-space:nowrap;text-align:left;">./projekte</div>
<svg class="s" style="left:1406px;top:1148px;" width="28" height="26" viewBox="0 0 28 26"><path d="M2.5 17.5 L11 24 L25.5 1.5" fill="none" stroke="#777" stroke-width="2"/></svg>
<div class="t" style="left:1680.8px;top:1142.9px;font-size:28px;line-height:36px;color:#333;font-weight:400;white-space:nowrap;text-align:left;">Von</div>
<div class="t" style="left:454.8px;top:1172.1px;font-size:4.2px;line-height:5px;color:#333;font-weight:400;white-space:nowrap;text-align:left;">Bodenplatte obere Lage_Teil 3</div>
<div class="t" style="left:1233.8px;top:1172.1px;font-size:4.2px;line-height:5px;color:#333;font-weight:400;white-space:nowrap;text-align:left;">./2016-100/CAD/Pläne/EG-01.pdf</div>
<div class="t" style="left:1680.8px;top:1172.1px;font-size:4.2px;line-height:5px;color:#333;font-weight:400;white-space:nowrap;text-align:left;">Planverzeichnis eingelesen</div>
<div class="b" style="left:46px;top:1197px;width:1825px;height:56px;background:#fafafa;"></div>
<div class="b" style="left:46px;top:1197px;width:69px;height:56px;background:#ffffff;"></div>
<div class="b" style="left:117px;top:1197px;width:183px;height:56px;background:#ffffff;"></div>
<div class="b" style="left:302px;top:1197px;width:147px;height:56px;background:#ffffff;"></div>
<div class="b" style="left:451px;top:1197px;width:376px;height:56px;background:#ffffff;"></div>
<div class="b" style="left:829px;top:1197px;width:224px;height:56px;background:#ffffff;"></div>
<div class="b" style="left:1055px;top:1197px;width:173px;height:56px;background:#ffffff;"></div>
<div class="b" style="left:1230px;top:1197px;width:168px;height:56px;background:#ffffff;"></div>
<div class="b" style="left:1400px;top:1197px;width:42px;height:56px;background:#ffffff;"></div>
<div class="b" style="left:1444px;top:1197px;width:147px;height:56px;background:#ffffff;"></div>
<div class="b" style="left:1593px;top:1197px;width:82px;height:56px;background:#ffffff;"></div>
<div class="b" style="left:1677px;top:1197px;width:194px;height:56px;background:#ffffff;"></div>
<div class="b" style="left:56px;top:1204px;width:50px;height:42px;background:#ffffff;border:2px solid #ececec;border-radius:8px;box-sizing:border-box;"></div>
<div class="b" style="left:61.2px;top:1220.7px;width:6.6px;height:6.6px;border-radius:50%;background:#111;"></div>
<div class="b" style="left:77.7px;top:1220.7px;width:6.6px;height:6.6px;border-radius:50%;background:#111;"></div>
<div class="b" style="left:94.2px;top:1220.7px;width:6.6px;height:6.6px;border-radius:50%;background:#111;"></div>
<div class="t" style="left:305.8px;top:1198.9px;font-size:28px;line-height:36px;color:#333;font-weight:400;white-space:nowrap;text-align:left;">24.12.2021</div>
<div class="t" style="left:454.8px;top:1198.9px;font-size:28px;line-height:36px;color:#333;font-weight:400;white-space:nowrap;text-align:left;">EG-01-Bewehrungsplan</div>
<div class="t" style="left:1233.8px;top:1198.9px;font-size:28px;line-height:36px;color:#333;font-weight:400;white-space:nowrap;text-align:left;">./projekte</div>
<svg class="s" style="left:1406px;top:1204px;" width="28" height="26" viewBox="0 0 28 26"><path d="M2.5 17.5 L11 24 L25.5 1.5" fill="none" stroke="#777" stroke-width="2"/></svg>
<div class="t" style="left:1680.8px;top:1198.9px;font-size:28px;line-height:36px;color:#333;font-weight:400;white-space:nowrap;text-align:left;">Von</div>
<div class="t" style="left:454.8px;top:1228.1px;font-size:4.2px;line-height:5px;color:#333;font-weight:400;white-space:nowrap;text-align:left;">Bodenplatte obere Lage_Teil 2</div>
<div class="t" style="left:1233.8px;top:1228.1px;font-size:4.2px;line-height:5px;color:#333;font-weight:400;white-space:nowrap;text-align:left;">./2016-100/CAD/Pläne/EG-01.pdf</div>
<div class="t" style="left:1680.8px;top:1228.1px;font-size:4.2px;line-height:5px;color:#333;font-weight:400;white-space:nowrap;text-align:left;">Planverzeichnis eingelesen</div>
<div class="b" style="left:46px;top:1253px;width:69px;height:56px;background:#efefef;"></div>
<div class="b" style="left:117px;top:1253px;width:183px;height:56px;background:#ffffff;"></div>
<div class="b" style="left:302px;top:1253px;width:147px;height:56px;background:#efefef;"></div>
<div class="b" style="left:451px;top:1253px;width:376px;height:56px;background:#efefef;"></div>
<div class="b" style="left:829px;top:1253px;width:224px;height:56px;background:#efefef;"></div>
<div class="b" style="left:1055px;top:1253px;width:173px;height:56px;background:#efefef;"></div>
<div class="b" style="left:1230px;top:1253px;width:168px;height:56px;background:#efefef;"></div>
<div class="b" style="left:1400px;top:1253px;width:42px;height:56px;background:#efefef;"></div>
<div class="b" style="left:1444px;top:1253px;width:147px;height:56px;background:#efefef;"></div>
<div class="b" style="left:1593px;top:1253px;width:82px;height:56px;background:#efefef;"></div>
<div class="b" style="left:1677px;top:1253px;width:194px;height:56px;background:#efefef;"></div>
<div class="b" style="left:56px;top:1260px;width:50px;height:42px;background:#f7f7f7;border:2px solid #ececec;border-radius:8px;box-sizing:border-box;"></div>
<div class="b" style="left:61.2px;top:1276.7px;width:6.6px;height:6.6px;border-radius:50%;background:#111;"></div>
<div class="b" style="left:77.7px;top:1276.7px;width:6.6px;height:6.6px;border-radius:50%;background:#111;"></div>
<div class="b" style="left:94.2px;top:1276.7px;width:6.6px;height:6.6px;border-radius:50%;background:#111;"></div>
<div class="t" style="left:305.8px;top:1254.9px;font-size:28px;line-height:36px;color:#333;font-weight:400;white-space:nowrap;text-align:left;">06.10.2021</div>
<div class="t" style="left:454.8px;top:1254.9px;font-size:28px;line-height:36px;color:#333;font-weight:400;white-space:nowrap;text-align:left;">Ansichten-3OG-01.pdf</div>
<div class="t" style="left:832.8px;top:1254.9px;font-size:28px;line-height:36px;color:#333;font-weight:400;white-space:nowrap;text-align:left;">Detailplan</div>
<div class="t" style="left:1058.8px;top:1254.9px;font-size:28px;line-height:36px;color:#333;font-weight:400;white-space:nowrap;text-align:left;">Karin Smith,</div>
<div class="t" style="left:1233.8px;top:1254.9px;font-size:28px;line-height:36px;color:#333;font-weight:400;white-space:nowrap;text-align:left;">./projekte</div>
<svg class="s" style="left:1406px;top:1260px;" width="28" height="26" viewBox="0 0 28 26"><path d="M2.5 17.5 L11 24 L25.5 1.5" fill="none" stroke="#777" stroke-width="2"/></svg>
<div class="t" style="left:1680.8px;top:1254.9px;font-size:28px;line-height:36px;color:#333;font-weight:400;white-space:nowrap;text-align:left;">Von</div>
<div class="t" style="left:1058.8px;top:1284.1px;font-size:4.2px;line-height:5px;color:#333;font-weight:400;white-space:nowrap;text-align:left;">ing</div>
<div class="t" style="left:1233.8px;top:1284.1px;font-size:4.2px;line-height:5px;color:#333;font-weight:400;white-space:nowrap;text-align:left;">./2016-100/CAD/Pläne/3OG-01.pdf</div>
<div class="t" style="left:1680.8px;top:1284.1px;font-size:4.2px;line-height:5px;color:#333;font-weight:400;white-space:nowrap;text-align:left;">Planverzeichnis eingelesen</div>
<div class="b" style="left:1956px;top:52px;width:36px;height:36px;background:#a3e6f5;border-radius:6px;"></div>
<svg class="s" style="left:1956px;top:52px;" width="36" height="36" viewBox="0 0 36 36"><path d="M5 4 L20 9.5 L15.5 13 L29.5 27 L26.5 30 L12.5 16 L8.5 20 Z" fill="none" stroke="#4d6a70" stroke-width="2" stroke-linejoin="round"/></svg>
<div class="b" style="left:2003px;top:52px;width:36px;height:36px;background:#f59797;border-radius:6px;"></div>
<div class="b" style="left:2009px;top:67.5px;width:24px;height:3.5px;background:#b86a6a;"></div>
<div class="b" style="left:2058px;top:50px;width:340px;height:46px;background:#efefef;border-radius:7px;"></div>
<svg class="s" style="left:2066px;top:54px;" width="24" height="34" viewBox="0 0 24 34"><path d="M12 2 V30" stroke="#999" stroke-width="2"/><path d="M2 20 L12 30 L22 20" fill="none" stroke="#999" stroke-width="2"/></svg>
<div class="t" style="left:2165px;top:58.1px;font-size:27px;line-height:35px;color:#333;font-weight:700;white-space:nowrap;text-align:left;">Functions</div>
<div class="b" style="left:1956px;top:116px;width:582px;height:468px;border:2px solid #e6e6e6;border-left-width:1.5px;box-sizing:border-box;"></div>
<div class="t" style="left:1962px;top:142.4px;font-size:28px;line-height:36px;color:#333;font-weight:400;white-space:nowrap;text-align:left;">Project</div>
<div class="t" style="left:2212.5px;top:121.9px;font-size:28px;line-height:36px;color:#333;font-weight:400;white-space:nowrap;text-align:left;">2022-100 Reihenhäuser</div>
<div class="t" style="left:2212.5px;top:160.1px;font-size:28px;line-height:36px;color:#333;font-weight:400;white-space:nowrap;text-align:left;">Südstadt In Bearbeitung</div>
<div class="b" style="left:1956px;top:198px;width:582px;height:2px;background:#e6e6e6;"></div>
<div class="t" style="left:1962px;top:204.4px;font-size:28px;line-height:36px;color:#333;font-weight:400;white-space:nowrap;text-align:left;">Plan type</div>
<div class="t" style="left:2212.5px;top:204.4px;font-size:28px;line-height:36px;color:#333;font-weight:400;white-space:nowrap;text-align:left;">Bebauungsplan</div>
<div class="b" style="left:1956px;top:242px;width:582px;height:2px;background:#e6e6e6;"></div>
<div class="t" style="left:1962px;top:248.4px;font-size:28px;line-height:36px;color:#333;font-weight:400;white-space:nowrap;text-align:left;">Plan No.</div>
<div class="t" style="left:2212.5px;top:248.4px;font-size:28px;line-height:36px;color:#333;font-weight:400;white-space:nowrap;text-align:left;">79</div>
<div class="b" style="left:1956px;top:286px;width:582px;height:2px;background:#e6e6e6;"></div>
<div class="t" style="left:1962px;top:292.4px;font-size:28px;line-height:36px;color:#333;font-weight:400;white-space:nowrap;text-align:left;">Plan content</div>
<div class="t" style="left:2212.5px;top:292.4px;font-size:28px;line-height:36px;color:#333;font-weight:400;white-space:nowrap;text-align:left;">Grundriss-01.pdf</div>
<div class="b" style="left:1956px;top:330px;width:582px;height:2px;background:#e6e6e6;"></div>
<div class="t" style="left:1962px;top:336.4px;font-size:28px;line-height:36px;color:#333;font-weight:400;white-space:nowrap;text-align:left;">Date</div>
<div class="t" style="left:2212.5px;top:336.4px;font-size:28px;line-height:36px;color:#333;font-weight:400;white-space:nowrap;text-align:left;">29.04.2022</div>
<div class="b" style="left:1956px;top:374px;width:582px;height:2px;background:#e6e6e6;"></div>
<div class="t" style="left:1962px;top:380.4px;font-size:28px;line-height:36px;color:#333;font-weight:400;white-space:nowrap;text-align:left;">Valid</div>
<div class="b" style="left:1956px;top:418px;width:582px;height:2px;background:#e6e6e6;"></div>
<div class="t" style="left:1962px;top:443.4px;font-size:28px;line-height:36px;color:#333;font-weight:400;white-space:nowrap;text-align:left;">PLOT file</div>
<div class="b" style="left:1956px;top:500px;width:582px;height:2px;background:#e6e6e6;"></div>
<div class="t" style="left:1962px;top:524.9px;font-size:28px;line-height:36px;color:#333;font-weight:400;white-space:nowrap;text-align:left;">Comment</div>
<div class="t" style="left:2212.5px;top:505.7px;font-size:28px;line-height:36px;color:#333;font-weight:400;white-space:nowrap;text-align:left;">Von Planverzeichnis</div>
<div class="t" style="left:2212.5px;top:543.9px;font-size:28px;line-height:36px;color:#333;font-weight:400;white-space:nowrap;text-align:left;">eingelesen</div>
<svg class="s" style="left:2215px;top:386px;" width="30" height="28" viewBox="0 0 30 28"><path d="M2.5 17.5 L10 24.5 L26 2" fill="none" stroke="#888" stroke-width="2"/></svg>
<svg class="s" style="left:2168px;top:426px;" width="32" height="32" viewBox="0 0 32 32"><path d="M2 6 H10 L13 2 H24 L27 5 V22 H2 Z" fill="none" stroke="#888" stroke-width="1.6"/><circle cx="23" cy="24" r="5.5" fill="#f8f8f8" stroke="#888" stroke-width="2"/><path d="M19.5 20.5 L26.5 27.5" stroke="#888" stroke-width="2"/></svg>
<svg class="s" style="left:2211px;top:425px;" width="34" height="34" viewBox="0 0 34 34">
<path d="M6 1 H25 L32 8 V32 H6 Z" fill="#ececec" stroke="#999" stroke-width="1.5"/>
<path d="M25 1 V8 H32" fill="#fff" stroke="#999" stroke-width="1.2"/>
<rect x="0" y="6" width="20" height="8" fill="#777"/>
<path d="M9 30 C13 24 15 20 16 14 C18 20 21 23 27 24" fill="none" stroke="#aaa" stroke-width="1.4"/>
</svg>
<div class="b" style="left:2257px;top:435px;width:58px;height:20px;background:#fafad2;"></div>
<div class="b" style="left:2322px;top:435px;width:160px;height:20px;background:#fafad2;"></div>
<div class="t" style="left:2258px;top:434.3px;font-size:17.5px;line-height:23px;color:#222;font-weight:400;white-space:nowrap;text-align:left;letter-spacing:0.6px;">262 KB</div>
<div class="t" style="left:2323px;top:434.3px;font-size:17.5px;line-height:23px;color:#222;font-weight:400;white-space:nowrap;text-align:left;letter-spacing:0.6px;">- 07.08.2013 21:32</div>
<svg class="s" style="left:2443px;top:467px;" width="30" height="28" viewBox="0 0 30 28"><path d="M2 6 H10 L13 2 H22 L25 5 V21 H2 Z" fill="none" stroke="#888" stroke-width="1.6"/><rect x="14" y="12" width="9" height="9" fill="#f8f8f8" stroke="#666" stroke-width="1.6"/><circle cx="19" cy="18" r="6" fill="none" stroke="#777" stroke-width="1.6"/></svg>
<svg class="s" style="left:2483px;top:465px;" width="30" height="30" viewBox="0 0 30 30"><path d="M2 6 H10 L13 2 H24 L27 5 V22 H2 Z" fill="none" stroke="#888" stroke-width="1.6"/><circle cx="23" cy="24" r="5.5" fill="#f8f8f8" stroke="#888" stroke-width="2"/><path d="M19.5 20.5 L26.5 27.5" stroke="#888" stroke-width="2"/></svg>
<div class="b" style="left:1956px;top:588px;width:582px;height:46px;border:2px solid #e6e6e6;border-left-width:1.5px;box-sizing:border-box;"></div>
<div class="t" style="left:1962px;top:594.7px;font-size:28px;line-height:36px;color:#333;font-weight:400;white-space:nowrap;text-align:left;">Drawn by</div>
<div class="t" style="left:2212.5px;top:594.7px;font-size:28px;line-height:36px;color:#333;font-weight:400;white-space:nowrap;text-align:left;">Ingeborg Stick, Mag.</div>
<div class="b" style="left:1956px;top:638px;width:582px;height:222px;border:2px solid #e6e6e6;border-left-width:1.5px;box-sizing:border-box;"></div>
<div class="t" style="left:1962px;top:644.2px;font-size:28px;line-height:36px;color:#333;font-weight:400;white-space:nowrap;text-align:left;">Created date</div>
<div class="t" style="left:2212.5px;top:644.2px;font-size:28px;line-height:36px;color:#333;font-weight:400;white-space:nowrap;text-align:left;">29.09.2018</div>
<div class="b" style="left:1956px;top:682px;width:582px;height:2px;background:#e6e6e6;"></div>
<div class="t" style="left:1962px;top:688.2px;font-size:28px;line-height:36px;color:#333;font-weight:400;white-space:nowrap;text-align:left;">Created by</div>
<div class="t" style="left:2212.5px;top:688.2px;font-size:28px;line-height:36px;color:#333;font-weight:400;white-space:nowrap;text-align:left;">Michael Mustermann</div>
<div class="b" style="left:1956px;top:726px;width:582px;height:2px;background:#e6e6e6;"></div>
<div class="t" style="left:1962px;top:732.2px;font-size:28px;line-height:36px;color:#333;font-weight:400;white-space:nowrap;text-align:left;">Changed date</div>
<div class="t" style="left:2212.5px;top:732.2px;font-size:28px;line-height:36px;color:#333;font-weight:400;white-space:nowrap;text-align:left;">23.08.2022</div>
<div class="b" style="left:1956px;top:770px;width:582px;height:2px;background:#e6e6e6;"></div>
<div class="t" style="left:1962px;top:776.2px;font-size:28px;line-height:36px;color:#333;font-weight:400;white-space:nowrap;text-align:left;">Changed by</div>
<div class="t" style="left:2212.5px;top:776.2px;font-size:28px;line-height:36px;color:#333;font-weight:400;white-space:nowrap;text-align:left;">Andreas Mustermann</div>
<div class="b" style="left:1956px;top:814px;width:582px;height:2px;background:#e6e6e6;"></div>
<div class="t" style="left:1962px;top:820.2px;font-size:28px;line-height:36px;color:#333;font-weight:400;white-space:nowrap;text-align:left;">Datum</div>
<svg class="s" style="left:2500px;top:1243px;" width="28" height="48" viewBox="0 0 28 48">
<path d="M3.5 7.5 C7.5 3.5 11.5 2.5 14.5 2.5 C20 2.5 24 6.5 24 12 C24 17 21 19.5 18 21.5 C15.5 23.5 14.5 25 14.5 28 C14.5 29.5 13.5 30.5 12 30.5 L10.5 30.5 C9 30.5 8 29.5 8 27.5 C8 23 10 20.5 12.5 18.5 C15 16.5 17 15 17 12 C17 9.5 15.5 8 13 8 C10.5 8 8.5 9.5 6.5 11 Z" fill="none" stroke="#e6c84a" stroke-width="2" stroke-linejoin="round"/>
<rect x="8" y="34" width="7" height="9" fill="none" stroke="#e6c84a" stroke-width="2"/>
</svg>
<div class="b" style="left:0px;top:1235px;width:2542px;height:77px;background:linear-gradient(rgba(0,0,0,0),rgba(0,0,0,0.06));"></div>
</body></html>
